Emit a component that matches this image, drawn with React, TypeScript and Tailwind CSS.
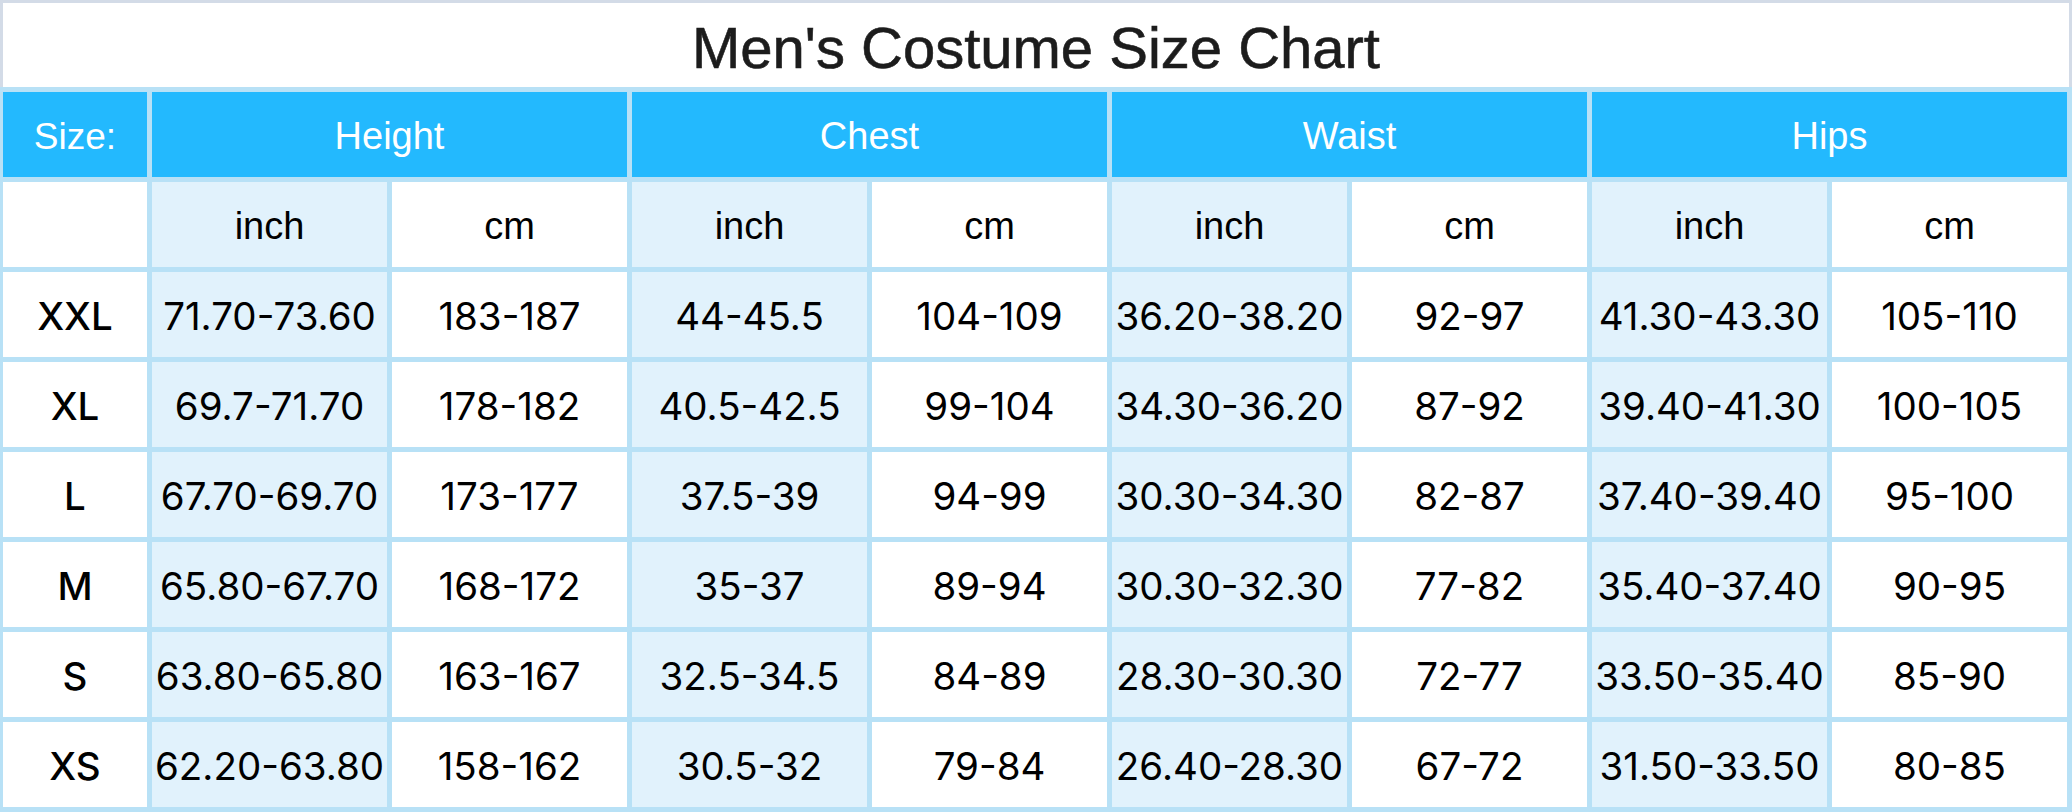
const GROUPS = ["Height", "Chest", "Waist", "Hips"];

const ROWS: [string, string[]][] = [
  ["XXL", ["71.70-73.60", "183-187", "44-45.5", "104-109", "36.20-38.20", "92-97", "41.30-43.30", "105-110"]],
  ["XL", ["69.7-71.70", "178-182", "40.5-42.5", "99-104", "34.30-36.20", "87-92", "39.40-41.30", "100-105"]],
  ["L", ["67.70-69.70", "173-177", "37.5-39", "94-99", "30.30-34.30", "82-87", "37.40-39.40", "95-100"]],
  ["M", ["65.80-67.70", "168-172", "35-37", "89-94", "30.30-32.30", "77-82", "35.40-37.40", "90-95"]],
  ["S", ["63.80-65.80", "163-167", "32.5-34.5", "84-89", "28.30-30.30", "72-77", "33.50-35.40", "85-90"]],
  ["XS", ["62.20-63.80", "158-162", "30.5-32", "79-84", "26.40-28.30", "67-72", "31.50-33.50", "80-85"]],
];

const cell = "flex items-center justify-center pt-[4px]";
const helv = "font-['Liberation_Sans',Arial,sans-serif]";
const data = "font-['Inter','Noto_Sans',sans-serif] text-[38.5px] text-black";

export default function App() {
  return (
    <div className="w-[2072px] h-[812px] bg-white flex flex-col">
      {/* title box */}
      <div
        className={`h-[87px] border-t-[3px] border-x-[3px] border-[#d3dbe7] ${cell} ${helv} text-[58px] text-[#1c1c1c] [-webkit-text-stroke:0.6px_#1c1c1c]`}
      >
        Men's Costume Size Chart
      </div>

      <div className="flex-1 bg-[#b8e1f6] pt-[5px] pb-[5px] pl-[3px] pr-[5px] grid grid-cols-[144px_repeat(8,1fr)] grid-rows-[repeat(8,1fr)] gap-[5px]">
        {/* group header */}
        <div className={`${cell} bg-[#23b9fe] text-white text-[37px] ${helv}`}>Size:</div>
        {GROUPS.map((g) => (
          <div key={g} className={`${cell} col-span-2 bg-[#23b9fe] text-white text-[38px] ${helv}`}>
            {g}
          </div>
        ))}

        {/* unit row */}
        <div className="bg-white" />
        {GROUPS.map((g) => [
          <div key={g + "i"} className={`${cell} bg-[#e1f2fc] text-black text-[38px] ${helv}`}>
            inch
          </div>,
          <div key={g + "c"} className={`${cell} bg-white text-black text-[38px] ${helv}`}>
            cm
          </div>,
        ])}

        {ROWS.map(([size, vals]) => [
          <div key={size} className={`${cell} bg-white ${data} font-medium`}>
            {size}
          </div>,
          ...vals.map((v, i) => (
            <div
              key={size + i}
              className={`${cell} ${i % 2 === 0 ? "bg-[#e1f2fc]" : "bg-white"} ${data}`}
            >
              {v}
            </div>
          )),
        ])}
      </div>
    </div>
  );
}
